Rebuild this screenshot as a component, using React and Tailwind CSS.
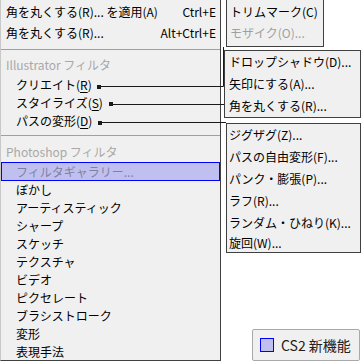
import React from 'react';

const font = "font-['Noto_Sans_CJK_JP','Liberation_Sans',sans-serif]";

const Key = ({ children }) => <span className="underline underline-offset-[2px]">{children}</span>;

const psItems = [
  'ぼかし',
  'アーティスティック',
  'シャープ',
  'スケッチ',
  'テクスチャ',
  'ビデオ',
  'ピクセレート',
  'ブラシストローク',
  '変形',
  '表現手法',
];

const distortItems = [
  'ジグザグ(Z)...',
  'パスの自由変形(F)...',
  'パンク・膨張(P)...',
  'ラフ(R)...',
  'ランダム・ひねり(K)...',
  '旋回(W)...',
];

const Connectors = () => (
  <svg
    className="pointer-events-none absolute left-0 top-0"
    width="361"
    height="361"
    viewBox="0 0 361 361"
  >
    <g fill="#1a1a1a" stroke="none">
      <rect x="97" y="85" width="4" height="4" />
      <rect x="109" y="102" width="4" height="4" />
      <rect x="98" y="121" width="4" height="4" />
    </g>
    <g fill="none" stroke="#1a1a1a" strokeWidth="1">
      <path d="M101 86.5 H223.5 V47" />
      <path d="M113 104.5 H224" />
      <path d="M102 122.5 H226" />
    </g>
  </svg>
);

export default function App() {
  return (
    <div className={`relative flex h-[361px] w-[361px] overflow-hidden bg-white text-[12px] leading-none text-black ${font}`}>
      {/* main filter menu */}
      <div className="h-[361px] w-[221px] shrink-0 overflow-hidden border-b border-l border-r border-b-[#404040] border-l-[#c8c8c8] border-r-[#404040] bg-[#f0f0f0]">
        <div className="flex h-[24px] items-center pl-[5px] pr-[4px]">
          <span>角を丸くする(R)... を適用(A)</span>
          <span className="ml-auto">Ctrl+E</span>
        </div>
        <div className="flex h-[18px] items-center pl-[5px] pr-[4px]">
          <span>角を丸くする(R)...</span>
          <span className="ml-auto">Alt+Ctrl+E</span>
        </div>
        <div className="h-[13px] pt-[7px]">
          <div className="border-t border-[#a0a0a0]" />
        </div>
        <div className="flex h-[21px] items-center pb-[2px] pl-[5px] text-[#a8a8a8]">Illustrator フィルタ</div>
        <div className="flex h-[18px] items-center pl-[15px]">
          クリエイト(<Key>R</Key>)
        </div>
        <div className="flex h-[18px] items-center pl-[15px]">
          スタイライズ(<Key>S</Key>)
        </div>
        <div className="flex h-[18px] items-center pl-[15px]">
          パスの変形(<Key>D</Key>)
        </div>
        <div className="h-[13px] pt-[5px]">
          <div className="border-t border-[#a0a0a0]" />
        </div>
        <div className="flex h-[19px] items-center pb-[1px] pl-[5px] text-[#a8a8a8]">Photoshop フィルタ</div>
        <div className="flex h-[19px] items-center border border-[#0000ff] bg-[#c0c0f0] pl-[14px] text-[#8080a0]">
          フィルタギャラリー...
        </div>
        {psItems.map((item) => (
          <div key={item} className="flex h-[18px] items-center pl-[15px]">
            {item}
          </div>
        ))}
      </div>

      {/* sub menus */}
      <div className="flex h-[361px] flex-1 flex-col">
        <div className="ml-[5px] h-[47px] w-[98px] border-b border-l border-r border-[#404040] bg-[#f0f0f0] pl-[3px]">
          <div className="flex h-[24px] items-center">トリムマーク(C)</div>
          <div className="flex h-[18px] items-center text-[#a0a0a0]">モザイク(O)...</div>
        </div>

        <div className="ml-[3px] mt-[3px] w-[137px] border border-[#404040] bg-[#f0f0f0] pl-[4px]">
          <div className="flex h-[22px] items-center">ドロップシャドウ(D)...</div>
          <div className="flex h-[22px] items-center">矢印にする(A)...</div>
          <div className="flex h-[22px] items-center">角を丸くする(R)...</div>
        </div>

        <div className="ml-[5px] mt-[5px] w-[135px] border border-[#404040] bg-[#f0f0f0] pl-[2px]">
          {distortItems.map((item, i) => (
            <div
              key={item}
              className={i === distortItems.length - 1 ? 'flex h-[18px] items-center' : 'flex h-[22px] items-center'}
            >
              {item}
            </div>
          ))}
        </div>

        <div className="mr-[1px] mt-auto flex h-[32px] w-[108px] items-center self-end rounded-[2px] border border-[#a8a8a8] bg-[#f0f0f0] pl-[7px]">
          <span className="h-[14px] w-[14px] shrink-0 border border-[#0000ff] bg-[#c0c0f0]" />
          <span className="ml-[7px] text-[14px] text-[#202020]">CS2 新機能</span>
        </div>
      </div>

      <Connectors />
    </div>
  );
}
